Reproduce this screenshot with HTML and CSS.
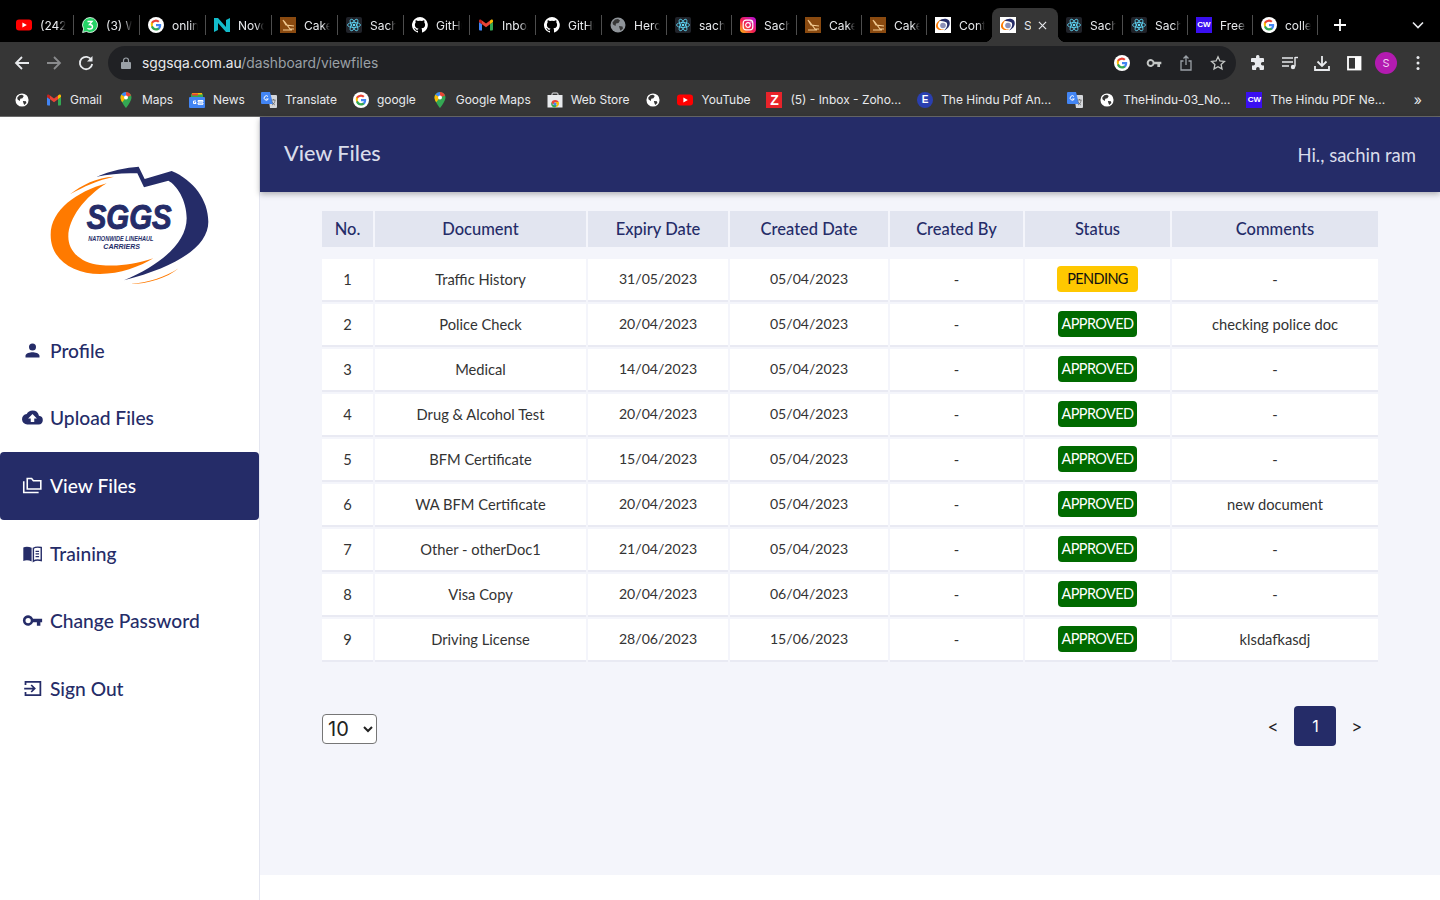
FILE: index.html
```html
<!DOCTYPE html>
<html lang="en">
<head>
    <meta charset="UTF-8">
    <title>View Files</title>
    <link rel="stylesheet" href="styles.css">
</head>
<body>

<!-- icon sprite -->
<svg class="sprite" xmlns="http://www.w3.org/2000/svg">
    <symbol id="i-yt" viewBox="0 0 16 16"><rect y="2.5" width="16" height="11" rx="3" fill="#f00"/><path d="M6.4 5.5 10.8 8l-4.4 2.5z" fill="#fff"/></symbol>
    <symbol id="i-g" viewBox="0 0 16 16"><circle cx="8" cy="8" r="8" fill="#fff"/><path d="M13.2 8.2c0-.4 0-.8-.1-1.1H8v2.1h2.9a2.5 2.5 0 0 1-1.1 1.6v1.4h1.8c1-1 1.6-2.3 1.6-4z" fill="#4285f4"/><path d="M8 13.5c1.5 0 2.700-.5 3.600-1.300l-1.800-1.400c-.5.300-1.100.5-1.800.5-1.400 0-2.600-1-3-2.200H3.200v1.400A5.500 5.500 0 0 0 8 13.500z" fill="#34a853"/><path d="M5 8.600a3.300 3.300 0 0 1 0-2.100V5.100H3.200a5.500 5.500 0 0 0 0 4.900z" fill="#fbbc05"/><path d="M8 4.800c.8 0 1.500.3 2.100.8l1.500-1.500A5.500 5.500 0 0 0 3.200 5.100L5 6.500c.4-1 1.600-1.700 3-1.700z" fill="#ea4335"/></symbol>
    <symbol id="i-n" viewBox="0 0 16 16"><path d="M0 1h4l8 9V3l4-2v14h-4L4 6v7l-4 2z" fill="#13bccb"/></symbol>
    <symbol id="i-cake" viewBox="0 0 16 16"><rect width="16" height="16" fill="#8a4a10"/><path d="M3 3l3 5 8 1M4 4l6 8 4 0M3 13h9" stroke="#f0c890" stroke-width="1.200" fill="none"/></symbol>
    <symbol id="i-react" viewBox="0 0 16 16"><rect width="16" height="16" rx="2" fill="#20232a"/><g fill="none" stroke="#61dafb" stroke-width=".8"><ellipse cx="8" cy="8" rx="6.500" ry="2.500"/><ellipse cx="8" cy="8" rx="6.500" ry="2.500" transform="rotate(60 8 8)"/><ellipse cx="8" cy="8" rx="6.500" ry="2.500" transform="rotate(120 8 8)"/></g><circle cx="8" cy="8" r="1.300" fill="#61dafb"/></symbol>
    <symbol id="i-gh" viewBox="0 0 16 16"><path fill="#fff" d="M8 0a8 8 0 0 0-2.500 15.600c.4.100.5-.2.500-.4v-1.400c-2.200.5-2.700-1-2.700-1-.4-.9-.9-1.200-.9-1.200-.7-.5.100-.5.100-.5.800.1 1.200.8 1.200.8.700 1.200 1.900.9 2.300.7.100-.5.300-.9.500-1.100-1.800-.2-3.600-.9-3.600-4 0-.9.300-1.600.8-2.100-.1-.2-.4-1 .1-2.100 0 0 .7-.2 2.200.8a7.600 7.600 0 0 1 4 0c1.500-1 2.200-.8 2.200-.8.400 1.100.2 1.900.1 2.100.5.600.8 1.300.8 2.100 0 3.100-1.900 3.700-3.700 3.900.3.300.6.800.6 1.500v2.200c0 .2.100.5.600.4A8 8 0 0 0 8 0z"/></symbol>
    <symbol id="i-m" viewBox="0 0 16 16"><path d="M1 13.500V5l3 2.300v6.200H2a1 1 0 0 1-1-1z" fill="#4285f4"/><path d="M12 13.500V7.300L15 5v7.500a1 1 0 0 1-1 1z" fill="#34a853"/><path d="M12 3.500v3.800l3-2.300V3.800c0-1-1.200-1.600-2-1z" fill="#fbbc05"/><path d="M4 7.300V3.500L8 6.500l4-3v3.800L8 10.300z" fill="#ea4335"/><path d="M1 3.800V5l3 2.300V3.500l-1-.7c-.8-.6-2 0-2 1z" fill="#c5221f"/></symbol>
    <symbol id="i-globe" viewBox="0 0 16 16"><circle cx="8" cy="8" r="7.500" fill="currentColor"/><path d="M5 2.500 8 2l2 1.500L8.500 6 6 6.500 5.500 9 3 7.500 2.500 5.500zM9 9l3.500.5.500 2-2.500 2.300L9.500 11z" fill="#363636"/></symbol>
    <symbol id="i-sggs" viewBox="0 0 16 16"><rect width="16" height="16" fill="#fff"/><path d="M4 4c3-3 8-3 10-.5 2 3.500 0 8-5 10 3-2.500 4-6 2.500-8C9.500 4 6.500 4 4 4z" fill="#252c68"/><path d="M6 3C2 4 0 8 1.500 11c2 2.500 5.500 2.500 8 1.500-3 .3-5.500-.5-6.500-3-.6-2 .5-4.500 3-6.500z" fill="#ff7a00"/><circle cx="8" cy="8.500" r="2.800" fill="#8d90b8"/></symbol>
    <symbol id="i-maps" viewBox="0 0 16 16"><path d="M8 0a5.500 5.500 0 0 0-5.500 5.500C2.500 9.500 8 16 8 16s5.500-6.500 5.500-10.500A5.500 5.500 0 0 0 8 0z" fill="#34a853"/><path d="M3.300 2.800 8 5.500V0a5.500 5.500 0 0 0-4.700 2.800z" fill="#4285f4"/><path d="M8 0v5.500l5-2A5.500 5.500 0 0 0 8 0z" fill="#ea4335"/><path d="M2.500 5.500c0 1.500.8 3.300 1.700 4.800L8 5.500 3.300 2.800a5.500 5.500 0 0 0-.8 2.700z" fill="#fbbc05"/><circle cx="8" cy="5.500" r="2" fill="#fff"/></symbol>
    <symbol id="i-translate" viewBox="0 0 16 16"><path d="M7 3h8a1 1 0 0 1 1 1v11a1 1 0 0 1-1 1H9z" fill="#d5d7db"/><path d="M1 0h8l3 12H1a1 1 0 0 1-1-1V1a1 1 0 0 1 1-1z" fill="#4285f4"/><path d="M7 4.500a2.200 2.200 0 1 0 .3 2.500H5.200" fill="none" stroke="#fff"/><path d="M10.500 8h4M12.500 7v1M11 13c2-1 3-3 3-5M11 9.500c.5 1.500 2 3 3 3.500" stroke="#666" stroke-width=".8" fill="none"/></symbol>
    <symbol id="i-store" viewBox="0 0 16 16"><path d="M5 3.500V2a1 1 0 0 1 1-1h4a1 1 0 0 1 1 1v1.500" fill="none" stroke="#e8eaed"/><rect x="0.500" y="3" width="15" height="12.500" fill="#e8eaed"/><path d="M8 8a4 4 0 0 0-3.600 2.200L6 13l2-3h3.800A4 4 0 0 0 8 8z" fill="#ea4335"/><path d="M4.400 10.200A4 4 0 0 0 7 15.500h1.500L10 13H6z" fill="#34a853"/><path d="M11.800 10H8l2 3-1.500 2.500a4 4 0 0 0 3.300-5.500z" fill="#fbbc05"/><circle cx="8" cy="12" r="1.500" fill="#4285f4"/></symbol>
    <symbol id="i-person" viewBox="0 0 24 24"><path fill="currentColor" d="M12 12a4 4 0 1 0 0-8 4 4 0 0 0 0 8zm0 2c-2.700 0-8 1.300-8 4v2h16v-2c0-2.700-5.300-4-8-4z"/></symbol>
    <symbol id="i-cloud" viewBox="0 0 24 24"><path fill="currentColor" d="M19.350 10.040A7.490 7.490 0 0 0 12 4a7.500 7.500 0 0 0-6.650 4.040A6 6 0 0 0 6 20h13a5 5 0 0 0 .35-9.960zM14 13v4h-4v-4H7l5-5 5 5z"/></symbol>
    <symbol id="i-folders" viewBox="0 0 24 24"><path fill="none" stroke="currentColor" stroke-width="1.800" d="M2 7v13h17M6 16V4h5l2 2.500h8.500V16z"/></symbol>
    <symbol id="i-book" viewBox="0 0 24 24"><path fill="currentColor" d="M1.500 5C4 4 8 4 11 5.500V21c-3-1.500-7-1.500-9.500-.5z"/><path fill="none" stroke="currentColor" stroke-width="1.600" d="M13 6c2-1.300 6-1.500 9-.8v14.800c-3-.7-7-.5-9 .8z"/><path stroke="currentColor" stroke-width="1.400" d="M15.500 9.500h4M15.500 12.500h4M15.500 15.500h4"/></symbol>
    <symbol id="i-key" viewBox="0 0 24 24"><path fill="currentColor" d="M12.650 10A6 6 0 1 0 12.650 14H17v4h4v-4h2v-4zM7 15a3 3 0 1 1 0-6 3 3 0 0 1 0 6z"/></symbol>
    <symbol id="i-signout" viewBox="0 0 24 24"><path fill="none" stroke="currentColor" stroke-width="2" d="M4 8V4.500h17v15H4V16M2.500 12H14M10.500 8l4 4-4 4"/></symbol>
</svg>

<div class="tabstrip">
    <div class="tab"><svg class="fav"><use href="#i-yt"/></svg><span class="tab-title">(242) YouTube</span></div>
    <div class="tab"><svg class="fav" viewBox="0 0 16 16"><path d="M8 .5a7.500 7.500 0 0 0-6.400 11.400L.6 15.500l3.700-1A7.500 7.500 0 1 0 8 .5z" fill="#25d366" stroke="#fff" stroke-width=".8"/><path d="M5.500 4.500h4.500L7.500 7.500c2 0 3 1 3 2.200 0 1.500-1.300 2.300-2.700 2.300-1 0-1.800-.3-2.300-.8" fill="none" stroke="#fff" stroke-width="1.400"/></svg><span class="tab-title">(3) WhatsApp</span></div>
    <div class="tab"><svg class="fav"><use href="#i-g"/></svg><span class="tab-title">online</span></div>
    <div class="tab"><svg class="fav"><use href="#i-n"/></svg><span class="tab-title">Novo</span></div>
    <div class="tab"><svg class="fav"><use href="#i-cake"/></svg><span class="tab-title">Cake</span></div>
    <div class="tab"><svg class="fav"><use href="#i-react"/></svg><span class="tab-title">Sachin</span></div>
    <div class="tab"><svg class="fav"><use href="#i-gh"/></svg><span class="tab-title">GitHub</span></div>
    <div class="tab"><svg class="fav"><use href="#i-m"/></svg><span class="tab-title">Inbox</span></div>
    <div class="tab"><svg class="fav"><use href="#i-gh"/></svg><span class="tab-title">GitHub</span></div>
    <div class="tab tab-narrow"><svg class="fav fav-grey"><use href="#i-globe"/></svg><span class="tab-title">Heroku</span></div>
    <div class="tab tab-narrow"><svg class="fav"><use href="#i-react"/></svg><span class="tab-title">sachin</span></div>
    <div class="tab tab-narrow">
        <svg class="fav" viewBox="0 0 16 16">
            <defs>
                <linearGradient id="insta" x1="0" y1="1" x2="1" y2="0">
                    <stop offset="0" stop-color="#fdc10f"/>
                    <stop offset=".45" stop-color="#f3204f"/>
                    <stop offset="1" stop-color="#b010e0"/>
                </linearGradient>
            </defs>
            <rect width="16" height="16" rx="4" fill="url(#insta)"/>
            <rect x="3.200" y="3.200" width="9.600" height="9.600" rx="2.800" fill="none" stroke="#fff" stroke-width="1.200"/>
            <circle cx="8" cy="8" r="2.300" fill="none" stroke="#fff" stroke-width="1.200"/>
            <circle cx="11" cy="5" r=".7" fill="#fff"/>
        </svg>
        <span class="tab-title">Sachin</span>
    </div>
    <div class="tab tab-narrow"><svg class="fav"><use href="#i-cake"/></svg><span class="tab-title">Cake</span></div>
    <div class="tab tab-narrow"><svg class="fav"><use href="#i-cake"/></svg><span class="tab-title">Cake</span></div>
    <div class="tab tab-narrow tab-plain"><svg class="fav"><use href="#i-sggs"/></svg><span class="tab-title">Contact</span></div>
    <div class="tab-active">
        <svg class="fav"><use href="#i-sggs"/></svg>
        <span class="tab-title tab-title-short">SGGS</span>
        <svg class="tab-close" viewBox="0 0 10 10"><path d="M1 1l8 8M9 1l-8 8" stroke="#e8eaed" stroke-width="1.300"/></svg>
    </div>
    <div class="tab tab-narrow"><svg class="fav"><use href="#i-react"/></svg><span class="tab-title">Sachin</span></div>
    <div class="tab tab-narrow"><svg class="fav"><use href="#i-react"/></svg><span class="tab-title">Sachin</span></div>
    <div class="tab tab-narrow"><span class="fav ic-cw">CW</span><span class="tab-title">Free</span></div>
    <div class="tab tab-narrow"><svg class="fav"><use href="#i-g"/></svg><span class="tab-title">college</span></div>
    <svg class="new-tab" viewBox="0 0 12 12"><path d="M6 0v12M0 6h12" stroke="#fff" stroke-width="1.800"/></svg>
    <svg class="tab-menu" viewBox="0 0 12 8"><path d="M1 1.500l5 5 5-5" stroke="#e8eaed" stroke-width="1.600" fill="none"/></svg>
</div>

<div class="toolbar">
    <svg class="nav-btn" viewBox="0 0 16 16"><path d="M15 8H2M8 2 2 8l6 6" stroke="#e8eaed" stroke-width="1.800" fill="none"/></svg>
    <svg class="nav-btn" viewBox="0 0 16 16"><path d="M1 8h13M8 2l6 6-6 6" stroke="#8a8b8d" stroke-width="1.800" fill="none"/></svg>
    <svg class="nav-btn" viewBox="0 0 16 16"><path d="M13.500 5A6.200 6.200 0 1 0 14.200 9" stroke="#e8eaed" stroke-width="1.800" fill="none"/><path d="M14.500 1v5.500H9z" fill="#e8eaed"/></svg>
    <div class="omnibox">
        <svg class="lock" viewBox="0 0 10 12"><path d="M2.500 5V3.500a2.500 2.500 0 0 1 5 0V5" stroke="#9aa0a6" stroke-width="1.200" fill="none"/><rect y="5" width="10" height="7" rx="1" fill="#9aa0a6"/></svg>
        <span class="url">sggsqa.com.au<span class="url-path">/dashboard/viewfiles</span></span>
        <div class="omni-icons">
            <svg class="tool"><use href="#i-g"/></svg>
            <svg class="tool tool-grey"><use href="#i-key"/></svg>
            <svg class="tool" viewBox="0 0 16 16"><path d="M5.500 6H3v9h10V6h-2.500M8 10V1M5.500 3.500 8 1l2.500 2.500" stroke="#9aa0a6" stroke-width="1.300" fill="none"/></svg>
            <svg class="tool" viewBox="0 0 16 16"><path d="M8 1.800l1.900 4.100 4.500.5-3.300 3 .9 4.500L8 11.700l-4 2.200.9-4.500-3.300-3 4.500-.5z" stroke="#c4c7c5" stroke-width="1.300" fill="none"/></svg>
        </div>
    </div>
    <div class="tool-icons">
        <svg class="tool" viewBox="0 0 16 16"><path fill="#e8eaed" d="M6 1.500a1.800 1.800 0 0 1 3.500 0V3H13a1 1 0 0 1 1 1v3h-1.300a1.800 1.800 0 0 0 0 3.600H14V14a1 1 0 0 1-1 1H9.700v-1.300a1.800 1.800 0 0 0-3.600 0V15H3a1 1 0 0 1-1-1v-3.400h1.300a1.800 1.800 0 0 0 0-3.600H1V4a1 1 0 0 1 1-1h4z"/></svg>
        <svg class="tool" viewBox="0 0 16 16"><path d="M0 3h11M0 7h11M0 11h7" stroke="#e8eaed" stroke-width="1.400"/><path d="M13 2v9.500" stroke="#e8eaed" stroke-width="1.400"/><path d="M13 2.500h3" stroke="#e8eaed" stroke-width="1.400"/><circle cx="11" cy="12" r="2.200" fill="#e8eaed"/></svg>
        <svg class="tool" viewBox="0 0 16 16"><path d="M8 1v9.500M3.500 6.500 8 11l4.500-4.500" stroke="#e8eaed" stroke-width="1.800" fill="none"/><path d="M1 11v4h14v-4" stroke="#e8eaed" stroke-width="1.800" fill="none"/></svg>
        <svg class="tool" viewBox="0 0 16 16"><rect x="2" y="2" width="12.500" height="12.500" fill="none" stroke="#fff" stroke-width="1.800"/><rect x="9" y="2" width="5.500" height="12.500" fill="#fff"/></svg>
        <span class="avatar">S</span>
        <svg class="menu-dots" viewBox="0 0 4 16"><circle cx="2" cy="2.500" r="1.500" fill="#e8eaed"/><circle cx="2" cy="8" r="1.500" fill="#e8eaed"/><circle cx="2" cy="13.500" r="1.500" fill="#e8eaed"/></svg>
    </div>
</div>

<div class="bookmarks">
    <span class="bm"><svg class="bm-ic bm-globe"><use href="#i-globe"/></svg></span>
    <span class="bm"><svg class="bm-ic"><use href="#i-m"/></svg>Gmail</span>
    <span class="bm"><svg class="bm-ic"><use href="#i-maps"/></svg>Maps</span>
    <span class="bm">
        <svg class="bm-ic" viewBox="0 0 16 16"><path d="M3 1h10l1 4H2z" fill="#fbbc05"/><path d="M2 2.500h12V6H2z" fill="#34a853"/><path d="M3 1.500h6v2H3z" fill="#ea4335"/><rect y="5" width="16" height="11" rx="1" fill="#4285f4"/><path d="M7 9H4.500v2.500H7v-1H5.800M9 8.500h5v1.300H9zM9 11h5v1.300H9z" fill="none" stroke="#fff"/></svg>
        News
    </span>
    <span class="bm"><svg class="bm-ic"><use href="#i-translate"/></svg>Translate</span>
    <span class="bm"><svg class="bm-ic"><use href="#i-g"/></svg>google</span>
    <span class="bm"><svg class="bm-ic"><use href="#i-maps"/></svg>Google Maps</span>
    <span class="bm"><svg class="bm-ic"><use href="#i-store"/></svg>Web Store</span>
    <span class="bm"><svg class="bm-ic bm-globe"><use href="#i-globe"/></svg></span>
    <span class="bm"><svg class="bm-ic"><use href="#i-yt"/></svg>YouTube</span>
    <span class="bm"><span class="bm-ic ic-z">Z</span>(5) - Inbox - Zoho...</span>
    <span class="bm"><span class="bm-ic ic-e">E</span>The Hindu Pdf An...</span>
    <span class="bm"><svg class="bm-ic"><use href="#i-translate"/></svg></span>
    <span class="bm"><svg class="bm-ic bm-globe"><use href="#i-globe"/></svg>TheHindu-03_No...</span>
    <span class="bm"><span class="bm-ic ic-cw">CW</span>The Hindu PDF Ne...</span>
    <span class="bm-more">»</span>
</div>

<div class="app">
    <aside class="sidebar">
        <svg class="logo" viewBox="0 0 660 450">
            <path fill="#252c68" d="M230 80C270 62 320 52 356 50L374 87 455 63C520 90 565 150 565 215 565 290 470 350 312 391 420 345 500 280 500 205 500 150 470 105 445 92L372 112 352 70C310 68 270 72 230 80Z"/>
            <path fill="#ff7a00" d="M260 100C170 125 92 180 92 255 92 330 160 372 240 372 300 372 360 350 400 325 340 345 290 350 240 345 185 340 145 305 145 260 145 205 195 140 260 100Z"/>
            <path fill="#ff7a00" d="M150 133C185 105 230 82 282 80 235 90 190 110 150 133Z"/>
            <path fill="#ff7a00" d="M330 402C385 398 435 382 476 355 440 385 385 402 330 402Z"/>
            <text class="logo-main" x="200" y="238" textLength="255" lengthAdjust="spacingAndGlyphs">SGGS</text>
            <text class="logo-sub" x="205" y="274" textLength="195" lengthAdjust="spacingAndGlyphs">NATIONWIDE LINEHAUL</text>
            <text class="logo-sub" x="250" y="298" textLength="110" lengthAdjust="spacingAndGlyphs">CARRIERS</text>
        </svg>
        <nav class="side-nav">
            <a class="side-link"><svg class="side-ic"><use href="#i-person"/></svg>Profile</a>
            <a class="side-link"><svg class="side-ic"><use href="#i-cloud"/></svg>Upload Files</a>
            <a class="side-link active"><svg class="side-ic"><use href="#i-folders"/></svg>View Files</a>
            <a class="side-link"><svg class="side-ic"><use href="#i-book"/></svg>Training</a>
            <a class="side-link"><svg class="side-ic"><use href="#i-key"/></svg>Change Password</a>
            <a class="side-link"><svg class="side-ic"><use href="#i-signout"/></svg>Sign Out</a>
        </nav>
    </aside>

    <div class="main">
        <header class="page-head">
            <h1>View Files</h1>
            <span class="greeting">Hi., sachin ram</span>
        </header>
        <section class="content">
            <table class="files">
                <colgroup>
                    <col class="c-no"><col class="c-doc"><col class="c-exp"><col class="c-created"><col class="c-by"><col class="c-status"><col class="c-comments">
                </colgroup>
                <thead>
                    <tr><th>No.</th><th>Document</th><th>Expiry Date</th><th>Created Date</th><th>Created By</th><th>Status</th><th>Comments</th></tr>
                </thead>
                <tbody>
                    <tr><td>1</td><td>Traffic History</td><td>31/05/2023</td><td>05/04/2023</td><td>-</td><td><span class="badge pending">PENDING</span></td><td>-</td></tr>
                    <tr><td>2</td><td>Police Check</td><td>20/04/2023</td><td>05/04/2023</td><td>-</td><td><span class="badge approved">APPROVED</span></td><td>checking police doc</td></tr>
                    <tr><td>3</td><td>Medical</td><td>14/04/2023</td><td>05/04/2023</td><td>-</td><td><span class="badge approved">APPROVED</span></td><td>-</td></tr>
                    <tr><td>4</td><td>Drug &amp; Alcohol Test</td><td>20/04/2023</td><td>05/04/2023</td><td>-</td><td><span class="badge approved">APPROVED</span></td><td>-</td></tr>
                    <tr><td>5</td><td>BFM Certificate</td><td>15/04/2023</td><td>05/04/2023</td><td>-</td><td><span class="badge approved">APPROVED</span></td><td>-</td></tr>
                    <tr><td>6</td><td>WA BFM Certificate</td><td>20/04/2023</td><td>05/04/2023</td><td>-</td><td><span class="badge approved">APPROVED</span></td><td>new document</td></tr>
                    <tr><td>7</td><td>Other - otherDoc1</td><td>21/04/2023</td><td>05/04/2023</td><td>-</td><td><span class="badge approved">APPROVED</span></td><td>-</td></tr>
                    <tr><td>8</td><td>Visa Copy</td><td>20/04/2023</td><td>06/04/2023</td><td>-</td><td><span class="badge approved">APPROVED</span></td><td>-</td></tr>
                    <tr><td>9</td><td>Driving License</td><td>28/06/2023</td><td>15/06/2023</td><td>-</td><td><span class="badge approved">APPROVED</span></td><td>klsdafkasdj</td></tr>
                </tbody>
            </table>
            <div class="table-foot">
                <select class="page-size"><option>10</option></select>
                <div class="pager">
                    <span class="pager-arrow">&lt;</span>
                    <span class="pager-num">1</span>
                    <span class="pager-arrow">&gt;</span>
                </div>
            </div>
        </section>
    </div>
</div>

</body>
</html>
```

FILE: styles.css
```css
* {
    box-sizing: border-box;
}
html, body {
    margin: 0;
    height: 900px;
    overflow: hidden;
}
body {
    display: flex;
    flex-direction: column;
    background: #fff;
    font-family: Lato, "Noto Sans", sans-serif;
}
.sprite {
    display: none;
}

/* browser chrome */
.tabstrip {
    display: flex;
    align-items: center;
    height: 42px;
    padding: 8px 0 0 8px;
    background: #000;
    font-family: Inter, sans-serif;
    font-size: 12px;
    color: #e8eaed;
}
.tab {
    display: flex;
    align-items: center;
    flex: none;
    gap: 8px;
    width: 66px;
    height: 20px;
    padding-left: 8px;
    border-right: 1px solid #4d4d4d;
}
.tab-narrow {
    width: 65px;
}
.tab-plain {
    border-right: 0;
}
.fav {
    flex: none;
    width: 16px;
    height: 16px;
}
.fav-grey {
    color: #8f9499;
}
.ic-cw {
    display: block;
    background: #3a0ff0;
    color: #fff;
    font: 700 8px/16px "Liberation Sans", sans-serif;
    text-align: center;
}
.ic-z {
    display: block;
    background: #e8232a;
    color: #fff;
    font: 700 14px/16px "Liberation Sans", sans-serif;
    text-align: center;
}
.ic-e {
    display: block;
    border-radius: 50%;
    background: #2a3fb0;
    color: #fff;
    font: 700 10px/16px "Liberation Sans", sans-serif;
    text-align: center;
}
.tab-title {
    width: 26px;
    overflow: hidden;
    white-space: nowrap;
    -webkit-mask-image: linear-gradient(to right, #000 70%, transparent);
    mask-image: linear-gradient(to right, #000 70%, transparent);
}
.tab-active {
    position: relative;
    display: flex;
    align-items: center;
    flex: none;
    gap: 8px;
    align-self: flex-end;
    width: 66px;
    height: 34px;
    padding-left: 8px;
    background: #363636;
    border-radius: 8px 8px 0 0;
}
.tab-active::before,
.tab-active::after {
    content: "";
    position: absolute;
    bottom: 0;
    width: 8px;
    height: 8px;
}
.tab-active::before {
    left: -8px;
    background: radial-gradient(circle at 0 0, #000 8px, #363636 8.500px);
}
.tab-active::after {
    right: -8px;
    background: radial-gradient(circle at 100% 0, #000 8px, #363636 8.500px);
}
.tab-title-short {
    width: 7px;
    -webkit-mask-image: none;
    mask-image: none;
}
.tab-close {
    width: 9px;
    height: 9px;
    margin-left: -1px;
}
.new-tab {
    width: 12px;
    height: 12px;
    margin-left: 16px;
}
.tab-menu {
    width: 12px;
    height: 8px;
    margin-left: 66px;
}
.toolbar {
    display: flex;
    align-items: center;
    height: 42px;
    padding: 0 0 0 14px;
    background: #363636;
}
.nav-btn {
    flex: none;
    width: 16px;
    height: 16px;
    margin-right: 16px;
}
.omnibox {
    display: flex;
    align-items: center;
    flex: none;
    width: 1128px;
    height: 34px;
    margin-left: -2px;
    padding: 0 10px 0 13px;
    background: #202124;
    border-radius: 17px;
    font-family: Inter, sans-serif;
    font-size: 13.800px;
}
.lock {
    width: 10px;
    height: 12px;
    margin-right: 11px;
}
.url {
    color: #e8eaed;
}
.url-path {
    color: #9aa0a6;
}
.omni-icons {
    display: flex;
    gap: 16px;
    margin-left: auto;
}
.tool {
    flex: none;
    width: 16px;
    height: 16px;
}
.tool-grey {
    color: #c4c7c5;
}
.tool-icons {
    display: flex;
    align-items: center;
    gap: 16px;
    margin-left: 14px;
}
.avatar {
    display: flex;
    align-items: center;
    justify-content: center;
    width: 22px;
    height: 22px;
    margin-left: -3px;
    border-radius: 50%;
    background: #b31bb0;
    color: #f0d0f0;
    font-family: Inter, sans-serif;
    font-size: 11px;
}
.menu-dots {
    width: 4px;
    height: 16px;
    margin-left: 3px;
}
.bookmarks {
    display: flex;
    align-items: center;
    gap: 16px;
    height: 33px;
    padding: 0 0 1px 14px;
    background: #363636;
    border-bottom: 1px solid #6a6a6a;
    font-family: Inter, sans-serif;
    font-size: 11.960px;
    color: #e8eaed;
    white-space: nowrap;
}
.bm {
    display: flex;
    align-items: center;
    gap: 8px;
}
.bm-ic {
    flex: none;
    width: 16px;
    height: 16px;
}
.bm-globe {
    width: 14px;
    height: 14px;
    margin: 0 1px;
    color: #fff;
}
.bm-more {
    margin-left: auto;
    margin-right: 18px;
    font-size: 14px;
}

/* page */
.app {
    display: flex;
    flex: 1;
    min-height: 0;
}
.sidebar {
    flex: none;
    width: 260px;
    padding-top: 33px;
    border-right: 1px solid #e4e6f0;
    background: #fff;
}
.logo {
    display: block;
    width: 220px;
    height: 150px;
    margin: 0 0 17px 20px;
}
.logo-main {
    font: italic 700 105px "Liberation Sans", sans-serif;
    fill: #252c68;
    stroke: #252c68;
    stroke-width: 3px;
}
.logo-sub {
    font: italic 700 23px "Liberation Sans", sans-serif;
    fill: #252c68;
}
.side-link {
    display: flex;
    align-items: center;
    gap: 7px;
    height: 67.600px;
    padding: 0 0 1px 22px;
    border-radius: 4px;
    color: #252c68;
    font-size: 19.200px;
    font-weight: 500;
}
.side-link.active {
    background: #252c68;
    color: #fff;
}
.side-ic {
    flex: none;
    width: 21px;
    height: 21px;
}
.main {
    display: flex;
    flex-direction: column;
    flex: 1;
    min-width: 0;
}
.page-head {
    position: relative;
    display: flex;
    align-items: center;
    justify-content: space-between;
    height: 75px;
    padding: 0 24px;
    background: #252c68;
    box-shadow: 0 2px 6px rgba(0, 0, 0, 0.3);
    color: #d9dcea;
}
.page-head h1 {
    margin: 0 0 4px;
    font-size: 21.600px;
    font-weight: 500;
}
.greeting {
    font-size: 18.500px;
}
.content {
    height: 683px;
    padding: 17px 60px 0;
    background: #f4f5fb;
}
.files {
    width: 1060px;
    table-layout: fixed;
    border-collapse: separate;
    border-spacing: 2px;
    font-size: 14.700px;
    color: #333;
    text-align: center;
}
.c-no { width: 51px; }
.c-doc { width: 211px; }
.c-exp { width: 140px; }
.c-created { width: 158px; }
.c-by { width: 133px; }
.c-status { width: 145px; }
.c-comments { width: 206px; }
.files th {
    height: 46px;
    padding: 0;
    border-bottom: 10px solid transparent;
    background: #e2e5f0;
    background-clip: padding-box;
    color: #252c68;
    font-size: 16.500px;
    font-weight: 500;
}
.files td {
    height: 43px;
    padding: 0 0 2px;
    background: #fff;
    border-bottom: 2px solid #e9eaf3;
}
.files td:nth-child(3),
.files td:nth-child(4) {
    font-size: 14.100px;
}
.badge {
    display: inline-block;
    height: 26px;
    padding: 0 4px;
    border-radius: 4px;
    font-size: 14.500px;
    letter-spacing: -0.600px;
    line-height: 26px;
    vertical-align: middle;
}
.pending {
    padding: 0 10px;
    background: #ffc800;
    color: #111;
}
.approved {
    background: #006a00;
    color: #fff;
}
.table-foot {
    display: flex;
    align-items: flex-start;
    justify-content: space-between;
    width: 1056px;
    margin: 42px 0 0 2px;
}
.page-size {
    width: 55px;
    height: 30px;
    margin-top: 8px;
    padding: 0 0 0 1px;
    border: 1px solid #767676;
    border-radius: 4px;
    background: #fff;
    color: #222;
    font-family: Inter, sans-serif;
    font-size: 20px;
}
.pager {
    display: flex;
    align-items: center;
    gap: 16px;
    margin-right: 15px;
    font-family: Inter, sans-serif;
    font-size: 16px;
    color: #222;
}
.pager-arrow:last-child {
    margin: 0 1px 0 -1px;
}
.pager-num {
    display: flex;
    align-items: center;
    justify-content: center;
    width: 42px;
    height: 40px;
    border-radius: 4px;
    background: #252c68;
    color: #fff;
}
```
